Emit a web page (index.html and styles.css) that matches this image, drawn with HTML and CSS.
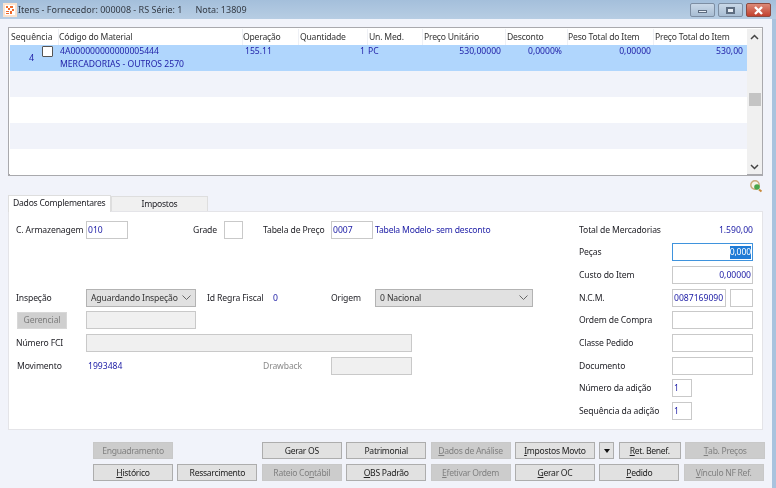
FILE: index.html
```html
<!DOCTYPE html>
<html lang="pt">
<head>
<meta charset="utf-8">
<title>Itens</title>
<link rel="stylesheet" href="styles.css">
</head>
<body>
<div class="window">
  <header class="titlebar">
    <svg class="app-icon" width="14" height="14" viewBox="0 0 14 14"><rect width="14" height="14" fill="#fbe3cf"/><rect x="2" y="2" width="10" height="10" fill="#fff"/><path d="M3 3h2v2H3zM7 3h3v2H7zM5 5h2v2H5zM9 6h2v2H9zM3 8h3v1H3zM7 8h2v3H7zM3 10h3v1H3z" fill="#ef6a2b"/></svg>
    <div class="title"><span>Itens - Fornecedor: 000008 - RS Série: 1</span><span>Nota: 13809</span></div>
    <div class="winbtns">
      <div class="winbtn"><i class="glyph-min"></i></div>
      <div class="winbtn"><i class="glyph-max"></i></div>
      <div class="winbtn close"><svg width="11" height="9" viewBox="0 0 11 9"><path d="M2 1l7 7M9 1L2 8" stroke="#fff" stroke-width="2.4"/></svg></div>
    </div>
  </header>
  <main class="client">
    <section class="grid">
      <div class="grid-main">
        <div class="row head">
          <div class="c c1">Sequência</div><div class="c c2">Código do Material</div><div class="c c3">Operação</div><div class="c c4">Quantidade</div><div class="c c5">Un. Med.</div><div class="c c6">Preço Unitário</div><div class="c c7">Desconto</div><div class="c c8">Peso Total do Item</div><div class="c c9">Preço Total do Item</div>
        </div>
        <div class="row selected">
          <div class="c c1 seq"><span>4</span><i class="checkbox"></i></div>
          <div class="c c2 two"><span>4A000000000000005444</span><span>MERCADORIAS - OUTROS 2570</span></div>
          <div class="c c3">155.11</div>
          <div class="c c4 right">1</div>
          <div class="c c5">PC</div>
          <div class="c c6 right">530,00000</div>
          <div class="c c7 right">0,0000%</div>
          <div class="c c8 right">0,00000</div>
          <div class="c c9 right">530,00</div>
        </div>
        <div class="row alt"></div>
        <div class="row"></div>
        <div class="row alt"></div>
        <div class="row"></div>
      </div>
      <div class="scroll">
        <svg class="arrow" width="9" height="6" viewBox="0 0 9 6"><path d="M1 5l3.500-3.500L8 5" fill="none" stroke="#444" stroke-width="1.500"/></svg>
        <div class="thumb"></div>
        <svg class="arrow" width="9" height="6" viewBox="0 0 9 6"><path d="M1 1l3.500 3.500L8 1" fill="none" stroke="#444" stroke-width="1.500"/></svg>
      </div>
    </section>
    <div class="tool-row">
      <svg width="14" height="14" viewBox="0 0 14 14"><circle cx="6" cy="6" r="4.200" fill="#f6f3e6" stroke="#c9a877" stroke-width="1.400"/><circle cx="8" cy="8" r="2.800" fill="#4aa64a"/><path d="M10 10.500l2.500 2" stroke="#c98a3c" stroke-width="2"/></svg>
    </div>
    <div class="tabs">
      <div class="tab active">Dados Complementares</div>
      <div class="tab">Impostos</div>
    </div>
    <section class="panel">
      <div class="form">
        <div class="f r1 a1">C. Armazenagem</div>
        <div class="f r1 a2"><input class="in w42 blue" value="010"></div>
        <div class="f r1 a3">Grade</div>
        <div class="f r1 a4"><input class="in w19"></div>
        <div class="f r1 a5">Tabela de Preço</div>
        <div class="f r1 a6"><input class="in w42 blue" value="0007"></div>
        <div class="f r1 a7 blue tight">Tabela Modelo- sem desconto</div>

        <div class="f r4 a1">Inspeção</div>
        <div class="f r4 a2"><div class="select w110">Aguardando Inspeção<svg width="9" height="5" viewBox="0 0 9 5"><path d="M.5.500l4 4 4-4" fill="none" stroke="#666"/></svg></div></div>
        <div class="f r4 a8">Id Regra Fiscal</div>
        <div class="f r4 a9 blue">0</div>
        <div class="f r4 a6">Origem</div>
        <div class="f r4 a7"><div class="select w158">0 Nacional<svg width="9" height="5" viewBox="0 0 9 5"><path d="M.5.500l4 4 4-4" fill="none" stroke="#666"/></svg></div></div>

        <div class="f r5 a1"><div class="mini-btn">Gerencial</div></div>
        <div class="f r5 a2"><input class="in w110 off" disabled></div>

        <div class="f r6 a1">Número FCI</div>
        <div class="f r6 a2"><input class="in w326 off" disabled></div>

        <div class="f r7 a1 nudge">Movimento</div>
        <div class="f r7 a2 blue nudge2">1993484</div>
        <div class="f r7 a5 muted">Drawback</div>
        <div class="f r7 a6"><input class="in w81 off" disabled></div>

        <div class="f r1 b1">Total de Mercadorias</div>
        <div class="f r1 b2 blue right-text">1.590,00</div>
        <div class="f r2 b1">Peças</div>
        <div class="f r2 b2"><div class="in w81 focus"><span class="sel">0,000</span></div></div>
        <div class="f r3 b1">Custo do Item</div>
        <div class="f r3 b2"><input class="in w81 blue tr" value="0,00000"></div>
        <div class="f r4 b1">N.C.M.</div>
        <div class="f r4 b2 pair"><input class="in w54 blue" value="0087169090"><input class="in w23"></div>
        <div class="f r5 b1">Ordem de Compra</div>
        <div class="f r5 b2"><input class="in w81"></div>
        <div class="f r6 b1">Classe Pedido</div>
        <div class="f r6 b2"><input class="in w81"></div>
        <div class="f r7 b1">Documento</div>
        <div class="f r7 b2"><input class="in w81"></div>
        <div class="f r8 b1">Número da adição</div>
        <div class="f r8 b2"><input class="in w20 blue" value="1"></div>
        <div class="f r9 b1">Sequência da adição</div>
        <div class="f r9 b2"><input class="in w20 blue" value="1"></div>
      </div>
    </section>
    <footer class="actions">
      <div class="btn-row">
        <button class="btn off">Enguadramento</button>
        <span class="btn-gap"></span>
        <button class="btn">Gerar OS</button>
        <button class="btn">Patrimonial</button>
        <button class="btn off"><u>D</u>ados de Análise</button>
        <button class="btn"><u>I</u>mpostos Movto</button>
        <button class="btn drop"><i class="caret"></i></button>
        <button class="btn ret"><u>R</u>et. Benef.</button>
        <button class="btn off"><u>T</u>ab. Preços</button>
      </div>
      <div class="btn-row">
        <button class="btn"><u>H</u>istórico</button>
        <button class="btn">Ressarcimento</button>
        <button class="btn off">Rateio Co<u>n</u>tábil</button>
        <button class="btn"><u>O</u>BS Padrão</button>
        <button class="btn off"><u>E</u>fetivar Ordem</button>
        <button class="btn"><u>G</u>erar OC</button>
        <button class="btn"><u>P</u>edido</button>
        <button class="btn off"><u>V</u>ínculo NF Ref.</button>
      </div>
    </footer>
  </main>
</div>
</body>
</html>
```
FILE: styles.css
```css
* { box-sizing: border-box; }
html, body { margin: 0; padding: 0; }
body {
  width: 776px;
  height: 488px;
  overflow: hidden;
  font-family: "Noto Sans", "Open Sans", sans-serif;
  font-size: 8.6px;
  color: #222228;
  background: #a9c3de;
}
.window {
  width: 776px;
  height: 488px;
  display: flex;
  flex-direction: column;
  filter: blur(0.35px);
}
.titlebar {
  height: 19px;
  display: flex;
  align-items: center;
  padding: 0 5px 0 3px;
  background: linear-gradient(#a4bfdb, #b7cde3);
}
.app-icon { flex: none; }
.title {
  display: flex;
  gap: 13px;
  margin-left: 1px;
  font-size: 9px;
  color: #333a44;
  flex: 1;
}
.winbtns { display: flex; gap: 3px; align-self: flex-start; margin-top: 3px; }
.winbtn {
  width: 25px;
  height: 14px;
  border: 1px solid #7d8ea3;
  border-radius: 2px;
  background: linear-gradient(#c9d8e8, #a8bdd3);
  display: flex;
  align-items: center;
  justify-content: center;
}
.winbtn.close {
  border-color: #8c4a40;
  background: linear-gradient(#dc8a78, #c2412f);
}
.glyph-min { width: 9px; height: 3px; background: #e8eef5; border: 1px solid #5d6c80; margin-top: 3px; }
.glyph-max { width: 9px; height: 7px; border: 2px solid #5d6c80; background: #e8eef5; }
.client {
  flex: 1;
  margin-right: 4px;
  background: #f1f3fa;
  padding: 8px 9px 0 8px;
  display: flex;
  flex-direction: column;
  min-height: 0;
}
.grid {
  height: 149px;
  flex: none;
  display: flex;
  border: 1px solid #a9a9ad;
  border-bottom-width: 2px;
  background: #fff;
  padding: 1px 0 0 1px;
}
.grid-main { width: 737px; flex: none; }
.row { display: flex; height: 26px; background: #fff; color: #2222a8; }
.row.head { height: 16px; color: #333; letter-spacing: -0.2px; }
.row.selected { background: #b0d6fd; }
.row.alt { background: #f1f3fa; }
.head .c { padding: 1px 0 0 1px; border-left: 1px solid #eef0f5; line-height: 14px; }
.head .c1 { border-left: 0; letter-spacing: 0; }
.head .c2, .head .c3, .head .c8 { padding-left: 0; }
.c { flex: none; white-space: nowrap; line-height: 13px; }
.c1 { width: 48px; }
.c2 { width: 184px; }
.c3 { width: 56px; }
.c4 { width: 69px; }
.c5 { width: 55px; }
.c6 { width: 83px; }
.c7 { width: 62px; }
.c8 { width: 86px; }
.c9 { width: 94px; }
.selected .c2 { padding-left: 2px; }
.selected .c3 { padding-left: 3px; }
.selected .c5 { padding-left: 1px; }
.right { text-align: right; }
.selected .c4 { padding-right: 2px; }
.selected .c6 { padding-right: 4px; }
.selected .c7 { padding-right: 5px; }
.selected .c8 { padding-right: 2px; }
.selected .c9 { padding-right: 4px; }
.two { display: flex; flex-direction: column; }
.seq { display: flex; justify-content: flex-end; padding-right: 5px; position: relative; }
.seq span { position: absolute; left: 19px; top: 6px; font-size: 9px; }
.checkbox { width: 11px; height: 11px; border: 1px solid #555; background: #fff; margin-top: 1px; border-radius: 1px; }
.scroll {
  flex: 1;
  background: #f0f0f0;
  display: flex;
  flex-direction: column;
  align-items: center;
  padding: 5px 0 4px;
}
.thumb { width: 12px; height: 13px; background: #c4c4c4; margin-top: 53px; }
.arrow:last-child { margin-top: auto; }
.tool-row {
  height: 19px;
  flex: none;
  display: flex;
  justify-content: flex-end;
  align-items: flex-end;
  padding-bottom: 2px;
}
.tabs { display: flex; height: 16px; flex: none; position: relative; z-index: 1; letter-spacing: -0.25px; }
.tab {
  width: 97px;
  height: 15px;
  margin-top: 1px;
  text-align: center;
  background: #f0f0f0;
  border: 1px solid #dedede;
  border-bottom: 0;
  line-height: 14px;
  white-space: nowrap;
}
.tab.active {
  width: 103px;
  height: 17px;
  margin-top: 0;
  background: #fff;
  text-align: left;
  padding-left: 4px;
}
.panel {
  flex: none;
  height: 219px;
  background: #fff;
  border: 1px solid #e4e4e8;
  padding-top: 6.500px;
}
.form {
  display: grid;
  grid-template-rows: repeat(9, 22.625px);
  grid-template-columns: 7px 70px 107px 14px 17px 39px 10px 58px 44px 204px 93px 82px;
  width: 745px;
}
.f { display: flex; align-items: center; white-space: nowrap; min-width: 0; letter-spacing: -0.12px; }
.r1 { grid-row: 1; } .r2 { grid-row: 2; } .r3 { grid-row: 3; } .r4 { grid-row: 4; } .r5 { grid-row: 5; }
.r6 { grid-row: 6; } .r7 { grid-row: 7; } .r8 { grid-row: 8; } .r9 { grid-row: 9; }
.a1 { grid-column: 2; }
.a2 { grid-column: 3; }
.a3 { grid-column: 4 / 6; }
.a4 { grid-column: 6; }
.a5 { grid-column: 7 / 9; }
.a6 { grid-column: 9; }
.a7 { grid-column: 10; }
.a8 { grid-column: 5 / 8; }
.a9 { grid-column: 8; }
.b1 { grid-column: 11; }
.b2 { grid-column: 12; }
.blue { color: #2222a8; }
.f.blue { letter-spacing: 0; }
.f.tight { letter-spacing: -0.18px; }
.muted { color: #8a8a8a; }
.nudge { padding-left: 1px; }
.nudge2 { padding-left: 2px; }
.right-text { justify-content: flex-end; padding-right: 1px; }
.in {
  height: 18px;
  border: 1px solid #c9c9c9;
  background: #fff;
  padding: 0 1px;
  font: inherit;
  outline: 0;
  flex: none;
  margin: 0;
  border-radius: 0;
}
.tr { text-align: right; }
.off { background: #f0f0f0; }
.w42 { width: 42px; } .w19 { width: 19px; } .w110 { width: 110px; } .w326 { width: 326px; }
.w81 { width: 81px; } .w54 { width: 54px; } .w23 { width: 23px; } .w20 { width: 20px; } .w158 { width: 158px; }
.pair { gap: 4px; }
.focus {
  border-color: #3f93dd;
  display: flex;
  align-items: center;
  justify-content: flex-end;
}
.sel { background: #1f7bd6; color: #fff; line-height: 13px; }
.select {
  height: 18px;
  background: #e1e1e1;
  border: 1px solid #b3b3b3;
  display: flex;
  align-items: center;
  justify-content: space-between;
  padding: 0 4px;
  color: #333;
  flex: none;
}
.mini-btn {
  width: 50px;
  height: 17px;
  background: #cfcfcf;
  border: 1px solid #d8d8d8;
  color: #7c7c7c;
  display: flex;
  align-items: center;
  justify-content: center;
  margin-left: 1px;
  flex: none;
}
.actions {
  margin-top: 12px;
  display: flex;
  flex-direction: column;
  gap: 5px;
  padding-left: 85px;
}
.btn-row { display: flex; gap: 4.400px; height: 17px; }
.btn {
  flex: none;
  width: 80px;
  height: 17px;
  padding: 0;
  font: inherit;
  letter-spacing: -0.3px;
  color: #222;
  background: #e1e1e1;
  border: 1px solid #adadad;
  white-space: nowrap;
  display: flex;
  align-items: center;
  justify-content: center;
}
.btn u { text-underline-offset: 1px; }
.btn.off { background: #cccccc; color: #808080; border-color: #c8c8c8; }
.btn-gap { width: 80px; flex: none; }
.btn.drop { width: 15px; }
.btn.ret { width: 62px; }
.caret { width: 0; height: 0; border: 3.500px solid transparent; border-top: 4px solid #111; border-bottom: 0; }
```
